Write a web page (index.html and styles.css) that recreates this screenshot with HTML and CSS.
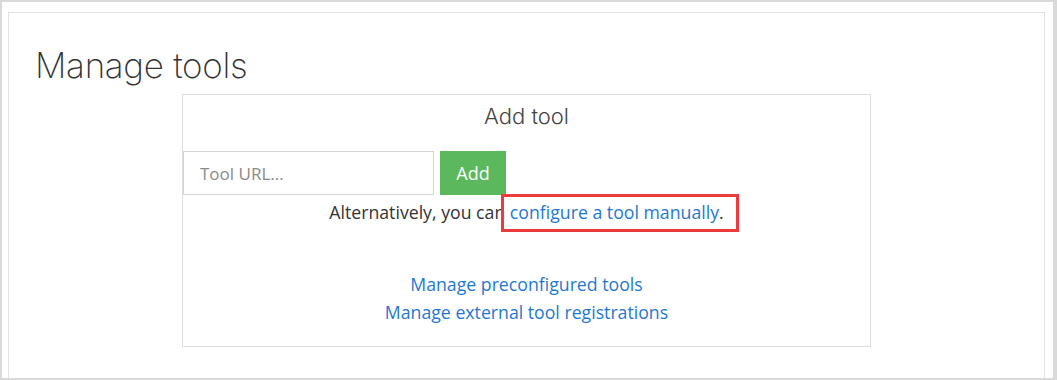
FILE: index.html
```html
<!DOCTYPE html>
<html lang="en">
<head>
  <meta charset="UTF-8">
  <meta name="viewport" content="width=device-width, initial-scale=1.0">
  <title>Manage tools</title>
  <link rel="stylesheet" href="styles.css">
</head>
<body>
<div class="frame">
  <div class="page">
    <h1>Manage tools</h1>

    <div class="tool-box">
      <h3>Add tool</h3>
      <form class="add-row">
        <input type="text" placeholder="Tool URL...">
        <button type="submit">Add</button>
      </form>
      <p class="alt">Alternatively, you can <span class="marked"><a href="#">configure a tool manually</a>.</span></p>

      <div class="links">
        <a href="#">Manage preconfigured tools</a>
        <a href="#">Manage external tool registrations</a>
      </div>
    </div>
  </div>
</div>
</body>
</html>
```

FILE: styles.css
```css
body {
  margin: 0;
  font-family: "Open Sans", "Liberation Sans", sans-serif;
  background-color: #ffffff;
  color: #333;
}
.frame {
  box-sizing: border-box;
  height: 380px;
  border: 2px solid #d9d9d9;
  border-right-width: 4px;
  padding: 10px 8px 0 6px;
}
.page {
  box-sizing: border-box;
  height: 100%;
  border: 1px solid #e2e2e2;
  border-bottom: none;
  padding: 1px 26px 0;
}
h1 {
  margin: 0;
  padding-top: 24px;
  font-family: Inter, "Open Sans", sans-serif;
  font-size: 35px;
  font-weight: 200;
  letter-spacing: -0.3px;
  line-height: 54px;
  color: #333;
}
.tool-box {
  width: 687px;
  margin: 2px auto 0;
  border: 1px solid #dedede;
  height: 251px;
  text-align: center;
}
h3 {
  margin: 0;
  padding-top: 6px;
  font-family: Inter, "Open Sans", sans-serif;
  font-size: 22px;
  font-weight: 300;
  line-height: 30px;
  color: #444;
}
.add-row {
  display: flex;
  gap: 6px;
  margin-top: 20px;
}
.add-row input {
  box-sizing: border-box;
  width: 251px;
  height: 44px;
  padding: 0 16px;
  border: 1px solid #d4d4d4;
  font-family: inherit;
  font-size: 17px;
  color: #333;
}
.add-row input::placeholder {
  color: #8a8a8a;
}
.add-row button {
  width: 66px;
  height: 44px;
  border: none;
  background-color: #5cb85c;
  color: white;
  font-family: inherit;
  font-size: 18px;
  cursor: pointer;
}
.alt {
  margin: 4px 0 0;
  font-size: 17.7px;
  line-height: 26px;
}
a {
  color: #1f78d1;
  text-decoration: none;
}
.marked {
  position: relative;
}
.marked::after {
  content: "";
  position: absolute;
  left: -9px;
  right: -15px;
  top: -6px;
  bottom: -8px;
  border: 3px solid #ec3b3d;
}
.links {
  margin-top: 45px;
}
.links a {
  display: block;
  font-size: 17.7px;
  line-height: 28px;
}
```
